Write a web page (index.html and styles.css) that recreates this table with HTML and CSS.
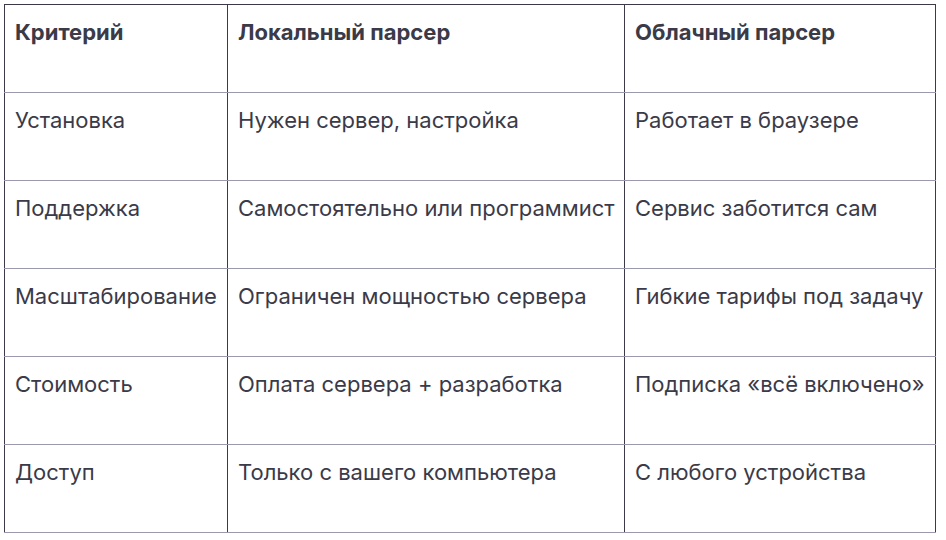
FILE: index.html
```html
<!DOCTYPE html>
<html lang="ru">
<head>
<meta charset="utf-8">
<link rel="stylesheet" href="styles.css">
</head>
<body>
<table class="cmp">
  <colgroup>
    <col class="c1">
    <col class="c2">
    <col class="c3">
  </colgroup>
  <thead>
    <tr><th>Критерий</th><th>Локальный парсер</th><th>Облачный парсер</th></tr>
  </thead>
  <tbody>
    <tr><td>Установка</td><td>Нужен сервер, настройка</td><td>Работает в браузере</td></tr>
    <tr><td>Поддержка</td><td>Самостоятельно или программист</td><td>Сервис заботится сам</td></tr>
    <tr><td>Масштабирование</td><td>Ограничен мощностью сервера</td><td>Гибкие тарифы под задачу</td></tr>
    <tr><td>Стоимость</td><td>Оплата сервера + разработка</td><td>Подписка «всё включено»</td></tr>
    <tr><td>Доступ</td><td>Только с вашего компьютера</td><td>С любого устройства</td></tr>
  </tbody>
</table>
</body>
</html>
```
FILE: styles.css
```css
html, body {
  margin: 0;
  background: #ffffff;
}
body {
  padding: 4px;
  font-family: Inter, "Noto Sans", sans-serif;
  color: #3a3a48;
}
.cmp {
  border-collapse: collapse;
  table-layout: fixed;
  width: 931px;
  font-size: 22px;
}
.c1 { width: 223px; }
.c2 { width: 397px; }
.c3 { width: 311px; }
.cmp th, .cmp td {
  text-align: left;
  vertical-align: top;
  height: 88px;
  box-sizing: border-box;
  padding: 11px 10px 0 10px;
  border-left: 1px solid #3c3a48;
  border-right: 1px solid #3c3a48;
  border-bottom: 1px solid #9b99ad;
  line-height: 33px;
  white-space: nowrap;
}
.cmp th {
  font-weight: 700;
  border-top: 1px solid #3c3a48;
}
```
